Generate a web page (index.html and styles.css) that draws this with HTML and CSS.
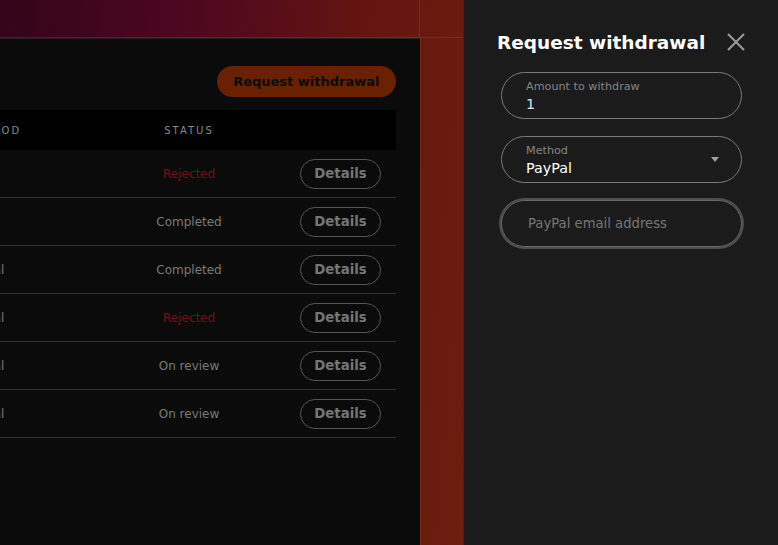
FILE: index.html
```html
<!DOCTYPE html>
<html lang="en">
<head>
    <meta charset="utf-8">
    <title>Withdrawals</title>
    <link rel="stylesheet" href="styles.css">
</head>
<body>
    <div class="stage">
        <div class="cell cell_tl"></div>
        <div class="cell cell_tr"></div>

        <div class="card">
            <div class="card_top">
                <button class="btn_request">Request withdrawal</button>
            </div>

            <div class="table">
                <div class="thead">
                    <div></div>
                    <div>METHOD</div>
                    <div class="c_status">STATUS</div>
                    <div></div>
                </div>

                <div class="trow">
                    <div></div>
                    <div class="c_method">Card</div>
                    <div class="c_status rejected">Rejected</div>
                    <div class="c_action"><button class="btn_details">Details</button></div>
                </div>
                <div class="trow">
                    <div></div>
                    <div class="c_method">Skrill</div>
                    <div class="c_status">Completed</div>
                    <div class="c_action"><button class="btn_details">Details</button></div>
                </div>
                <div class="trow">
                    <div></div>
                    <div class="c_method">Paypal</div>
                    <div class="c_status">Completed</div>
                    <div class="c_action"><button class="btn_details">Details</button></div>
                </div>
                <div class="trow">
                    <div></div>
                    <div class="c_method">Paypal</div>
                    <div class="c_status rejected">Rejected</div>
                    <div class="c_action"><button class="btn_details">Details</button></div>
                </div>
                <div class="trow">
                    <div></div>
                    <div class="c_method">Paypal</div>
                    <div class="c_status">On review</div>
                    <div class="c_action"><button class="btn_details">Details</button></div>
                </div>
                <div class="trow">
                    <div></div>
                    <div class="c_method">Paypal</div>
                    <div class="c_status">On review</div>
                    <div class="c_action"><button class="btn_details">Details</button></div>
                </div>
            </div>
        </div>

        <div class="cell cell_br"></div>
    </div>

    <div class="panel">
        <div class="panel_head">
            <h2>Request withdrawal</h2>
            <button class="btn_close" aria-label="Close">
                <svg width="18" height="18" viewBox="0 0 18 18">
                    <path d="M1 1 L17 17 M17 1 L1 17" stroke="#9a9a9a" stroke-width="2" fill="none"/>
                </svg>
            </button>
        </div>

        <div class="field">
            <div class="field_body">
                <div class="field_label">Amount to withdraw</div>
                <div class="field_value amount">1</div>
            </div>
        </div>

        <div class="field">
            <div class="field_body">
                <div class="field_label">Method</div>
                <div class="field_value">PayPal</div>
            </div>
            <span class="caret"></span>
        </div>

        <div class="field focus">
            <div class="placeholder">PayPal email address</div>
        </div>
    </div>
</body>
</html>
```

FILE: styles.css
```css
html, body {
    margin: 0;
    height: 100%;
}

body {
    font-family: "DejaVu Sans", sans-serif;
    background-color: #1b1b1b;
    display: flex;
    overflow: hidden;
}

button {
    font-family: inherit;
    cursor: pointer;
}

/* left area with the gradient and grid lines */
.stage {
    flex: 0 0 463px;
    display: grid;
    grid-template-columns: 420px 1fr;
    grid-template-rows: 38px 1fr;
    background: linear-gradient(95deg, #33051a 0%, #4c0720 35%, #641511 72%, #6c1f0e 100%);
}

.cell_tl {
    border-right: 1px solid rgba(255, 255, 255, 0.08);
    border-bottom: 1px solid rgba(255, 255, 255, 0.09);
}

.cell_tr {
    border-bottom: 1px solid rgba(255, 255, 255, 0.09);
}

.cell_br {
    border-left: 1px solid rgba(255, 255, 255, 0.08);
}

.card {
    margin-left: -320px;
    background-color: #0b0b0b;
    border-top: 1px solid #222;
    padding: 27px 24px 0 24px;
}

.card_top {
    display: flex;
    justify-content: flex-end;
}

.btn_request {
    height: 31px;
    padding: 0 16.5px;
    border: none;
    border-radius: 16px;
    background-color: #692100;
    color: #0d0d0d;
    font-size: 13px;
    font-weight: bold;
}

.table {
    margin-top: 13px;
}

.thead, .trow {
    display: grid;
    grid-template-columns: 261px 165px 118px 1fr;
    align-items: center;
}

.thead {
    height: 40px;
    background-color: #000;
    color: #7d8c94;
    font-size: 10px;
    letter-spacing: 2px;
}

.trow {
    height: 47px;
    border-bottom: 1px solid #333;
    color: #6f7f80;
    font-size: 12px;
}

.c_status {
    text-align: center;
    color: #7a7a7a;
}

.thead .c_status {
    color: #7d8c94;
}

.c_status.rejected {
    color: #741219;
}

.c_action {
    display: flex;
    justify-content: flex-end;
    padding-right: 15px;
}

.btn_details {
    width: 81px;
    height: 30px;
    border: 1px solid #555;
    border-radius: 15px;
    background: transparent;
    color: #767676;
    font-size: 13.3px;
    font-weight: bold;
    padding: 0;
}

/* right side panel */
.panel {
    flex: 1;
    background-color: #1b1b1b;
    border-left: 1px solid #2c2c2c;
    padding: 28px 33px 0 33px;
}

.panel_head {
    display: flex;
    justify-content: space-between;
    align-items: center;
    height: 28px;
    margin-bottom: 16px;
}

.panel_head h2 {
    margin: 0;
    color: #fff;
    font-size: 18.5px;
    font-weight: bold;
}

.btn_close {
    background: none;
    border: none;
    padding: 0;
    width: 18px;
    height: 18px;
    display: flex;
}

.field {
    display: flex;
    align-items: center;
    height: 47px;
    box-sizing: border-box;
    margin: 0 3px 17px 4px;
    padding: 0 22px 0 24px;
    border: 1px solid #7a7a7a;
    border-radius: 24px;
}

.field_body {
    flex: 1;
}

.field_label {
    font-size: 11.2px;
    line-height: 16px;
    color: #858585;
}

.field_value {
    font-size: 14.3px;
    line-height: 18px;
    color: #fff;
}

.field_value.amount {
    color: #d3e3f5;
}

.caret {
    width: 0;
    height: 0;
    border-left: 4px solid transparent;
    border-right: 4px solid transparent;
    border-top: 5px solid #a0a0a0;
}

.field.focus {
    border-color: #6a6a6a;
    box-shadow: 0 0 0 2px #4e4e4e;
    padding-left: 26px;
}

.placeholder {
    font-size: 13.2px;
    color: #767676;
}
```
